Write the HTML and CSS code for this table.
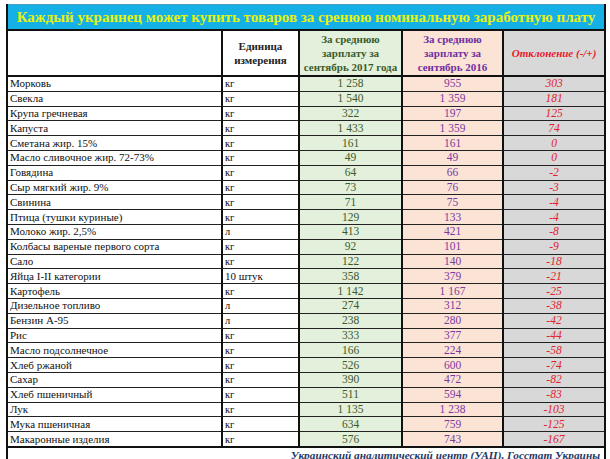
FILE: index.html
```html
<!DOCTYPE html>
<html lang="ru">
<head>
<meta charset="utf-8">
<title>Каждый украинец может купить товаров</title>
<link rel="stylesheet" href="styles.css">
</head>
<body>
<div class="sheet">
<table class="prices">
  <colgroup>
    <col class="c-name"><col class="c-unit"><col class="c-new"><col class="c-old"><col class="c-diff">
  </colgroup>
  <thead>
    <tr class="title-row"><th colspan="5">Каждый украинец может купить товаров за сренюю номинальную заработную плату</th></tr>
    <tr class="head-row">
      <th class="h-name"></th>
      <th class="h-unit">Единица<br>измерения</th>
      <th class="h-new">За среднюю<br>зарплату за<br>сентябрь 2017 года</th>
      <th class="h-old">За среднюю<br>зарплату за<br>сентябрь 2016</th>
      <th class="h-diff">Отклонение (-/+)</th>
    </tr>
  </thead>
  <tbody>
    <tr><td class="name">Морковь</td><td class="unit">кг</td><td class="new">1 258</td><td class="old">955</td><td class="diff">303</td></tr>
    <tr><td class="name">Свекла</td><td class="unit">кг</td><td class="new">1 540</td><td class="old">1 359</td><td class="diff">181</td></tr>
    <tr><td class="name">Крупа гречневая</td><td class="unit">кг</td><td class="new">322</td><td class="old">197</td><td class="diff">125</td></tr>
    <tr><td class="name">Капуста</td><td class="unit">кг</td><td class="new">1 433</td><td class="old">1 359</td><td class="diff">74</td></tr>
    <tr><td class="name">Сметана жир. 15%</td><td class="unit">кг</td><td class="new">161</td><td class="old">161</td><td class="diff">0</td></tr>
    <tr><td class="name">Масло сливочное жир. 72-73%</td><td class="unit">кг</td><td class="new">49</td><td class="old">49</td><td class="diff">0</td></tr>
    <tr><td class="name">Говядина</td><td class="unit">кг</td><td class="new">64</td><td class="old">66</td><td class="diff">-2</td></tr>
    <tr><td class="name">Сыр мягкий жир. 9%</td><td class="unit">кг</td><td class="new">73</td><td class="old">76</td><td class="diff">-3</td></tr>
    <tr><td class="name">Свинина</td><td class="unit">кг</td><td class="new">71</td><td class="old">75</td><td class="diff">-4</td></tr>
    <tr><td class="name">Птица (тушки куриные)</td><td class="unit">кг</td><td class="new">129</td><td class="old">133</td><td class="diff">-4</td></tr>
    <tr><td class="name">Молоко жир. 2,5%</td><td class="unit">л</td><td class="new">413</td><td class="old">421</td><td class="diff">-8</td></tr>
    <tr><td class="name">Колбасы вареные первого сорта</td><td class="unit">кг</td><td class="new">92</td><td class="old">101</td><td class="diff">-9</td></tr>
    <tr><td class="name">Сало</td><td class="unit">кг</td><td class="new">122</td><td class="old">140</td><td class="diff">-18</td></tr>
    <tr><td class="name">Яйца I-II категории</td><td class="unit wide">10 штук</td><td class="new">358</td><td class="old">379</td><td class="diff">-21</td></tr>
    <tr><td class="name">Картофель</td><td class="unit">кг</td><td class="new">1 142</td><td class="old">1 167</td><td class="diff">-25</td></tr>
    <tr><td class="name">Дизельное топливо</td><td class="unit">л</td><td class="new">274</td><td class="old">312</td><td class="diff">-38</td></tr>
    <tr><td class="name">Бензин А-95</td><td class="unit">л</td><td class="new">238</td><td class="old">280</td><td class="diff">-42</td></tr>
    <tr><td class="name">Рис</td><td class="unit">кг</td><td class="new">333</td><td class="old">377</td><td class="diff">-44</td></tr>
    <tr><td class="name">Масло подсолнечное</td><td class="unit">кг</td><td class="new">166</td><td class="old">224</td><td class="diff">-58</td></tr>
    <tr><td class="name">Хлеб ржаной</td><td class="unit">кг</td><td class="new">526</td><td class="old">600</td><td class="diff">-74</td></tr>
    <tr><td class="name">Сахар</td><td class="unit">кг</td><td class="new">390</td><td class="old">472</td><td class="diff">-82</td></tr>
    <tr><td class="name">Хлеб пшеничный</td><td class="unit">кг</td><td class="new">511</td><td class="old">594</td><td class="diff">-83</td></tr>
    <tr><td class="name">Лук</td><td class="unit">кг</td><td class="new">1 135</td><td class="old">1 238</td><td class="diff">-103</td></tr>
    <tr><td class="name">Мука пшеничная</td><td class="unit">кг</td><td class="new">634</td><td class="old">759</td><td class="diff">-125</td></tr>
    <tr><td class="name">Макаронные изделия</td><td class="unit">кг</td><td class="new">576</td><td class="old">743</td><td class="diff">-167</td></tr>
  </tbody>
  <tfoot>
    <tr class="foot-row"><td colspan="5">Украинский аналитический центр (УАЦ), Госстат Украины</td></tr>
  </tfoot>
</table>
</div>
</body>
</html>
```

FILE: styles.css
```css
html, body {
  margin: 0;
  padding: 0;
  background: #ffffff;
  overflow: hidden;
}

.sheet {
  width: 610px;
  height: 459px;
  padding: 4px 0 0 6px;
  box-sizing: border-box;
  font-family: "Liberation Serif", "Times New Roman", serif;
}

.prices {
  border-collapse: collapse;
  table-layout: fixed;
  width: 598px;
}

.c-name { width: 215px; }
.c-unit { width: 77px; }
.c-new { width: 103px; }
.c-old { width: 101px; }
.c-diff { width: 102px; }

.prices th,
.prices td {
  padding: 0;
  border-left: 2px solid #111;
  border-right: 2px solid #111;
  overflow: hidden;
  white-space: nowrap;
}

.title-row th {
  height: 24px;
  background: #14b0e6;
  color: #e8f20e;
  font-size: 15px;
  font-weight: bold;
  text-align: center;
  border-top: 1px solid #4a9cc0;
  border-bottom: 2px solid #111;
}

.head-row th {
  height: 43px;
  font-size: 11px;
  font-weight: bold;
  line-height: 14px;
  text-align: center;
  vertical-align: bottom;
  padding-bottom: 1px;
  border-bottom: 2px solid #111;
}

.h-name { background: #fff; }
.h-unit { background: #fff; color: #222; vertical-align: middle !important; }
.h-new { background: #e3f0db; color: #3c5c2c; }
.h-old { background: #fbe3d6; color: #7030a0; }
.h-diff {
  background: #d8d8d8;
  color: #e8182a;
  font-style: italic;
  vertical-align: middle !important;
}

.prices tbody td {
  height: 13.8px;
  font-size: 11.5px;
  line-height: 13px;
  border-bottom: 1px solid #222;
}

.name {
  text-align: left;
  padding-left: 2px !important;
  color: #111;
  font-size: 11px !important;
}

.unit {
  font-size: 10.5px !important;
  padding-left: 2px !important;
  color: #111;
}

.unit.wide { font-size: 11px !important; }

.new {
  background: #e3f0db;
  color: #3d5a2e;
  text-align: center;
}

.old {
  background: #fbe3d6;
  color: #7a3aa0;
  text-align: center;
}

.diff {
  background: #d8d8d8;
  color: #e3202e;
  font-style: italic;
  text-align: center;
}

.foot-row td {
  height: 20px;
  text-align: right;
  vertical-align: top;
  font-size: 11.3px;
  font-weight: bold;
  font-style: italic;
  color: #1f3864;
  padding: 1px 4px 0 0;
  border-top: 2px solid #111;
}
```
